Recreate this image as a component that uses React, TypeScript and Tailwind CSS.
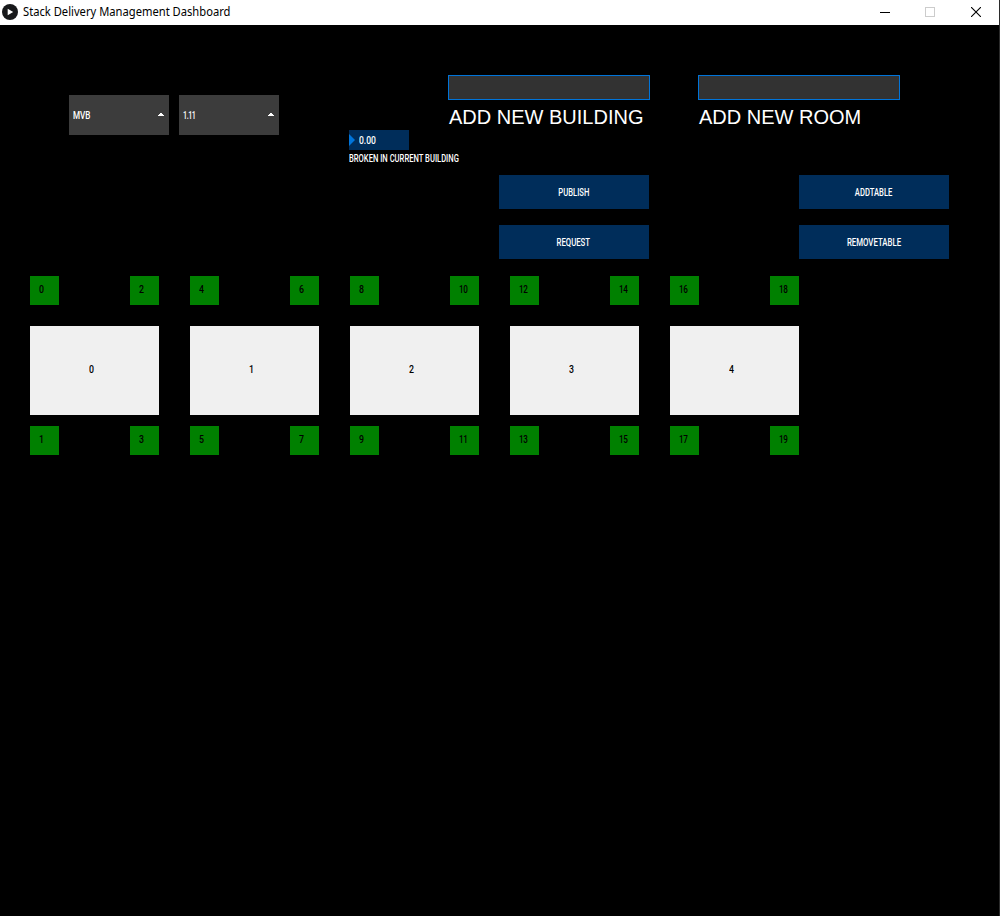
import React from "react";

const tables = [0, 1, 2, 3, 4];

function Label({ children, className = "" }: { children: React.ReactNode; className?: string }) {
  return (
    <span className={`block w-max whitespace-nowrap font-['Roboto'] text-[11.25px] leading-[12px] font-medium ${className}`}>
      {children}
    </span>
  );
}

function Dropdown({ text, textClass }: { text: string; textClass: string }) {
  return (
    <div className="flex h-[40px] w-[100px] items-center justify-between bg-[#3c3c3c] pr-[5px] pl-[3.5px] text-white">
      <Label className={`mt-[2px] origin-left ${textClass}`}>{text}</Label>
      <svg width="6" height="3" viewBox="0 0 6 3" className="-mt-px" fill="#fff">
        <path d="M2 0h2v1h1v1h1v1H0V2h1V1h1z" />
      </svg>
    </div>
  );
}

function Field({ label }: { label: string }) {
  return (
    <div className="w-[202px]">
      <input className="block h-[25px] w-[202px] border border-[#0074d9] bg-[#323232] px-1 text-white outline-none" />
      <span className="mt-[5px] ml-px block w-max font-['Liberation_Sans'] text-[20px] leading-[24px] whitespace-nowrap text-white">
        {label}
      </span>
    </div>
  );
}

function Action({ text, textClass }: { text: string; textClass: string }) {
  return (
    <button className="flex h-[34px] w-[150px] items-center justify-center bg-[#002d5a] pt-[2px] pr-px text-white">
      <Label className={textClass}>{text}</Label>
    </button>
  );
}

function Chair({ n }: { n: number }) {
  return (
    <div className="h-[29px] w-[29px] bg-[#008000] pt-[8px] pl-[8.5px] text-black">
      <Label className={n > 9 ? "origin-left scale-x-[.72] tracking-[-0.6px]" : "origin-left scale-x-[.78]"}>{n}</Label>
    </div>
  );
}

function Table({ n }: { n: number }) {
  return (
    <div className="w-[129px]">
      <div className="flex justify-between">
        <Chair n={n * 4} />
        <Chair n={n * 4 + 2} />
      </div>
      <div className="mt-[21px] mb-[11px] h-[89px] bg-[#f0f0f0] pt-[38px] pl-[58.5px] text-black">
        <Label className="origin-left scale-x-[.78]">{n}</Label>
      </div>
      <div className="flex justify-between">
        <Chair n={n * 4 + 1} />
        <Chair n={n * 4 + 3} />
      </div>
    </div>
  );
}

export default function App() {
  return (
    <div className="flex h-[916px] w-[1000px] flex-col overflow-hidden border-r border-[#2b2b2b] bg-black">
      <header className="flex h-[25px] shrink-0 items-center bg-white pl-[2px]">
        <svg width="16" height="16" viewBox="0 0 16 16" className="-mt-px">
          <circle cx="8" cy="8" r="8" fill="#17181a" />
          <path d="M5.7 4.8 11.2 8l-5.5 3.2z" fill="#fff" />
        </svg>
        <span className="-mt-[2px] ml-[5px] origin-left scale-x-[.932] font-['Noto_Sans'] text-[12px] leading-[16px] whitespace-nowrap text-black">
          Stack Delivery Management Dashboard
        </span>
        <div className="mr-[18px] ml-auto flex items-center gap-[35px]">
          <svg width="10" height="11" shapeRendering="crispEdges"><path d="M0 5.5h10" stroke="#000" /></svg>
          <svg width="10" height="10" className="-mt-px" shapeRendering="crispEdges"><path d="M.5.5h9v9h-9z" fill="none" stroke="#ccc" /></svg>
          <svg width="10" height="10" className="-mt-px ml-px"><path d="m0 0 10 10m0-10L0 10" stroke="#000" strokeWidth="1.1" /></svg>
        </div>
      </header>

      <main>
        <section className="flex h-[251px] items-start">
          <div className="mt-[70px] ml-[69px] flex gap-[10px]">
            <Dropdown text="MVB" textClass="scale-x-[.72]" />
            <Dropdown text="1.11" textClass="scale-x-[.64] tracking-[-0.7px]" />
          </div>
          <div className="mt-[105px] ml-[70px] w-[99px]">
            <div className="flex h-[20px] w-[60px] items-center bg-[#002d5a] text-white">
              <svg width="6" height="12" viewBox="0 0 6 12"><path d="M0 0 6 6 0 12z" fill="#0074d9" /></svg>
              <Label className="mt-[2px] ml-[3.5px] origin-left scale-x-[.76]">0.00</Label>
            </div>
            <Label className="mt-[3px] -ml-[0.5px] origin-left scale-x-[.676] text-white">BROKEN IN CURRENT BUILDING</Label>
          </div>
          <div className="mt-[50px] w-[202px]">
            <Field label="ADD NEW BUILDING" />
            <div className="mt-[46px] ml-[51px] flex flex-col gap-[16px]">
              <Action text="PUBLISH" textClass="scale-x-[.68]" />
              <Action text="REQUEST" textClass="scale-x-[.69]" />
            </div>
          </div>
          <div className="mt-[50px] ml-[48px] w-[251px]">
            <Field label="ADD NEW ROOM" />
            <div className="mt-[46px] ml-[101px] flex flex-col gap-[16px]">
              <Action text="ADDTABLE" textClass="scale-x-[.68]" />
              <Action text="REMOVETABLE" textClass="scale-x-[.695]" />
            </div>
          </div>
        </section>
        <section className="flex gap-[31px] pl-[30px]">
          {tables.map((n) => (
            <Table key={n} n={n} />
          ))}
        </section>
      </main>
    </div>
  );
}
